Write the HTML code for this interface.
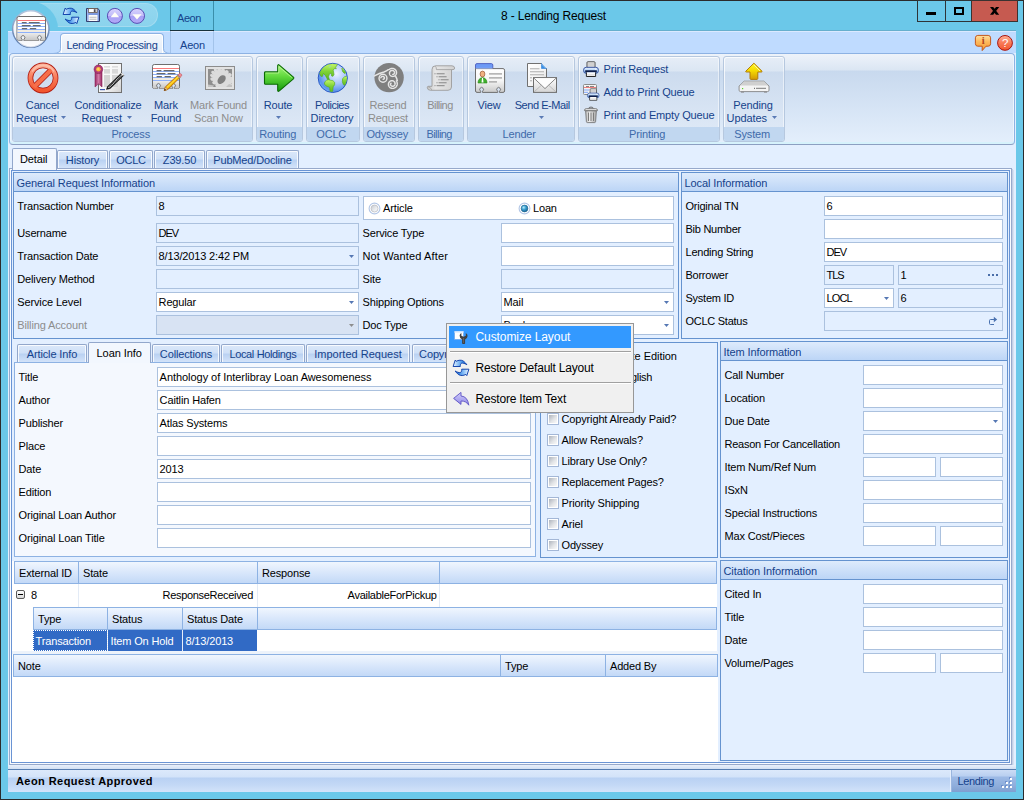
<!DOCTYPE html>
<html lang="en"><head><meta charset="utf-8"><title>8 - Lending Request</title>
<style>
html,body{margin:0;padding:0;}
body{width:1024px;height:800px;overflow:hidden;background:#6bc8e9;font-family:"Liberation Sans",sans-serif;font-size:11px;line-height:13px;color:#000;}
#win{position:absolute;left:0;top:0;width:1024px;height:800px;overflow:hidden;}
#win div,#win svg{position:absolute;box-sizing:border-box;}
.t{position:absolute;white-space:nowrap;display:block;}
.b{color:#15428b;}
.g{color:#8d8d8d;}
.f{border:1px solid #abc1de;background:#fff;}
.ro{background:#e3efff;}
.dis{background:#d8e3f3;}
.grp{border:1px solid #6593cf;background:#e3efff;}
.gh{background:linear-gradient(#deebfc,#bcd5f6);border-bottom:1px solid #6593cf;}
.rg{border:1px solid #b6c8df;border-radius:3px;box-shadow:inset 1px 1px 0 rgba(255,255,255,.75),inset -1px 0 0 rgba(255,255,255,.5);background:linear-gradient(#e6edf7 0,#dbe6f3 14px,#ccdbee 15px,#dde8f6 71px);}
.rgc{background:#c1d7f0;border-radius:0 0 2px 2px;}
.tab{border:1px solid #92a7cb;box-shadow:inset 1px 1px 0 rgba(255,255,255,.8),inset -1px 0 0 rgba(255,255,255,.8);border-bottom:none;border-radius:2px 2px 0 0;background:linear-gradient(#dbe8fa 0,#cfe0f7 45%,#b9d1f2 50%,#d6e5fa 100%);}
.tabsel{border:1px solid #92a7cb;border-bottom:none;border-radius:2px 2px 0 0;background:#f2f7fe;}
.hdr{background:linear-gradient(#f0f6fe 0,#d9e7fb 50%,#c3d9f7 100%);border:1px solid #8db2e3;}
.cb{border:1px solid #a3b7d7;background:linear-gradient(135deg,#b4b9c1 15%,#e2e4e7 55%,#f7f7f7 85%);box-shadow:inset 0 0 0 1px #fff;}

</style></head><body>
<div id="win">
<div class="" style="left:0px;top:0px;width:1024px;height:1px;background:#2b2b2b;"></div>
<div class="" style="left:0px;top:0px;width:1px;height:800px;background:#2b2b2b;"></div>
<div class="" style="left:1023px;top:0px;width:1px;height:800px;background:#2b2b2b;"></div>
<div class="" style="left:0px;top:799px;width:1024px;height:1px;background:#2b2b2b;"></div>
<div class="" style="left:214px;top:30px;width:802px;height:1px;background:#66afce;"></div>
<div class="" style="left:8px;top:31px;width:1008px;height:22px;background:#bfdbff;border-top:1px solid #dbe9ff;"></div>
<div class="" style="left:8px;top:53px;width:1008px;height:739px;background:#e3efff;"></div>
<span class="t " style="top:9px;letter-spacing:-0.160px;left:501.00px;font-size:12px;line-height:14px;">8 - Lending Request</span>
<div class="" style="left:917px;top:0px;width:101px;height:22px;background:#6bc8e9;border:1px solid #2e3436;"></div>
<div class="" style="left:945px;top:1px;width:1px;height:21px;background:#2e3436;"></div>
<div class="" style="left:971px;top:0px;width:47px;height:22px;background:#c65a50;border:1px solid #3a3231;"></div>
<div class="" style="left:926px;top:12px;width:10px;height:3px;background:#000;"></div>
<div class="" style="left:954px;top:7px;width:10px;height:8px;border:2px solid #000;"></div>
<svg style="left:989px;top:6px" width="12" height="10" viewBox="989 6 12 10"><path d="M990 7h3.2l6 7.7h-3.2zM996 7h3.2l-6 7.7h-3.2z" fill="#000"/></svg>
<div class="" style="left:34px;top:3px;width:124px;height:24px;background:linear-gradient(#93d7ef,#8bd3ed);border-radius:0 12px 12px 0;border:1px solid #a3dcf0;border-left:none;"></div>
<svg style="left:0;top:1px" width="70" height="30" viewBox="0 1 70 30"><circle cx="30.8" cy="29" r="27.2" fill="#6bc8e9"/></svg>
<div class="" style="left:170px;top:1px;width:1px;height:52px;background:linear-gradient(#3a8eaa 0,#3a8eaa 30px,#a3c3ea 30px);"></div>
<div class="" style="left:213px;top:1px;width:1px;height:52px;background:linear-gradient(#3a8eaa 0,#3a8eaa 30px,#a3c3ea 30px);"></div>
<div class="" style="left:170px;top:30px;width:44px;height:1px;background:#17323d;"></div>
<span class="t b" style="top:12px;letter-spacing:-0.430px;left:177px;">Aeon</span>
<div class="" style="left:60px;top:33px;width:104px;height:21px;background:linear-gradient(#f4f8fd,#e3ecf8);border:1px solid #8db2e3;border-bottom:none;border-radius:4px 4px 0 0;box-shadow:inset 0 1px 0 #fff,inset 1px 0 0 #fff,inset -1px 0 0 #fff;"></div>
<div class="" style="left:61px;top:53px;width:102px;height:1px;background:#e6eef9;"></div>
<svg style="left:52px;top:45px" width="9" height="9" viewBox="0 0 9 9"><path d="M8.5 0V3.5Q8.5 8.5 2 8.5H9V0Z" fill="#e3ecf8"/><path d="M8.5 0V3.5Q8.5 8.5 1 8.5" fill="none" stroke="#8db2e3"/></svg>
<svg style="left:163px;top:45px" width="9" height="9" viewBox="0 0 9 9"><path d="M.5 0V3.5Q.5 8.5 7 8.5H0V0Z" fill="#e3ecf8"/><path d="M.5 0V3.5Q.5 8.5 8 8.5" fill="none" stroke="#8db2e3"/></svg>
<span class="t b" style="top:39px;letter-spacing:-0.316px;left:66.5px;">Lending Processing</span>
<span class="t b" style="top:39px;letter-spacing:-0.180px;left:180px;">Aeon</span>
<div class="" style="left:9px;top:53px;width:1006px;height:92px;border:1px solid #8db2e3;border-bottom-color:#8c9fc2;border-radius:4px;background:linear-gradient(#eef3fa 0,#dbe6f3 16px,#c8d9ee 17px,#e4effc 100%);box-shadow:inset 0 -2px 0 #d6f2fc,inset 1px 0 0 #eef6fd,inset -1px 0 0 #eef6fd;"></div>
<div class="rg" style="left:12px;top:56px;width:241px;height:86px;"></div>
<div class="rgc" style="left:13px;top:127px;width:239px;height:14px;"></div>
<span class="t " style="top:128px;letter-spacing:-0.159px;left:111.38px;color:#3e6aaa;">Process</span>
<div class="rg" style="left:256px;top:56px;width:47px;height:86px;"></div>
<div class="rgc" style="left:257px;top:127px;width:45px;height:14px;"></div>
<span class="t " style="top:128px;letter-spacing:-0.152px;left:259.26px;color:#3e6aaa;">Routing</span>
<div class="rg" style="left:306px;top:56px;width:54px;height:86px;"></div>
<div class="rgc" style="left:307px;top:127px;width:52px;height:14px;"></div>
<span class="t " style="top:128px;letter-spacing:-0.214px;left:316.35px;color:#3e6aaa;">OCLC</span>
<div class="rg" style="left:363px;top:56px;width:52px;height:86px;"></div>
<div class="rgc" style="left:364px;top:127px;width:50px;height:14px;"></div>
<span class="t " style="top:128px;letter-spacing:-0.171px;left:366.39px;color:#3e6aaa;">Odyssey</span>
<div class="rg" style="left:418px;top:56px;width:46px;height:86px;"></div>
<div class="rgc" style="left:419px;top:127px;width:44px;height:14px;"></div>
<span class="t " style="top:128px;letter-spacing:-0.549px;left:426.45px;color:#3e6aaa;">Billing</span>
<div class="rg" style="left:467px;top:56px;width:108px;height:86px;"></div>
<div class="rgc" style="left:468px;top:127px;width:106px;height:14px;"></div>
<span class="t " style="top:128px;letter-spacing:-0.160px;left:502.54px;color:#3e6aaa;">Lender</span>
<div class="rg" style="left:578px;top:56px;width:142px;height:86px;"></div>
<div class="rgc" style="left:579px;top:127px;width:140px;height:14px;"></div>
<span class="t " style="top:128px;letter-spacing:-0.131px;left:629.07px;color:#3e6aaa;">Printing</span>
<div class="rg" style="left:723px;top:56px;width:62px;height:86px;"></div>
<div class="rgc" style="left:724px;top:127px;width:60px;height:14px;"></div>
<span class="t " style="top:128px;letter-spacing:-0.171px;left:734.37px;color:#3e6aaa;">System</span>
<span class="t b" style="top:99px;letter-spacing:-0.160px;left:25.85px;">Cancel</span>
<span class="t b" style="top:112px;letter-spacing:-0.059px;left:16.00px;">Request</span>
<svg style="left:61px;top:116px" width="5" height="3" viewBox="0 0 5 3"><path d="M0 0h5L2.5 3z" fill="#5a7ab5"/></svg>
<span class="t b" style="top:99px;letter-spacing:-0.138px;left:74.41px;">Conditionalize</span>
<span class="t b" style="top:112px;letter-spacing:-0.059px;left:81.50px;">Request</span>
<svg style="left:127px;top:116px" width="5" height="3" viewBox="0 0 5 3"><path d="M0 0h5L2.5 3z" fill="#5a7ab5"/></svg>
<span class="t b" style="top:99px;letter-spacing:-0.171px;left:154.12px;">Mark</span>
<span class="t b" style="top:112px;letter-spacing:-0.175px;left:150.83px;">Found</span>
<span class="t g" style="top:99px;letter-spacing:-0.164px;left:189.96px;">Mark Found</span>
<span class="t g" style="top:112px;letter-spacing:-0.176px;left:194.12px;">Scan Now</span>
<span class="t b" style="top:99px;letter-spacing:-0.165px;left:263.72px;">Route</span>
<svg style="left:276px;top:116px" width="5" height="3" viewBox="0 0 5 3"><path d="M0 0h5L2.5 3z" fill="#5a7ab5"/></svg>
<span class="t b" style="top:99px;letter-spacing:-0.488px;left:315.00px;">Policies</span>
<span class="t b" style="top:112px;letter-spacing:-0.137px;left:310.62px;">Directory</span>
<span class="t g" style="top:99px;letter-spacing:-0.177px;left:369.56px;">Resend</span>
<span class="t g" style="top:112px;letter-spacing:-0.164px;left:368.07px;">Request</span>
<span class="t g" style="top:99px;letter-spacing:-0.549px;left:427.25px;">Billing</span>
<span class="t b" style="top:99px;letter-spacing:-0.165px;left:477.51px;">View</span>
<span class="t b" style="top:99px;letter-spacing:-0.449px;left:514.70px;">Send E-Mail</span>
<svg style="left:539px;top:116px" width="5" height="3" viewBox="0 0 5 3"><path d="M0 0h5L2.5 3z" fill="#5a7ab5"/></svg>
<span class="t b" style="top:99px;letter-spacing:-0.162px;left:733.36px;">Pending</span>
<span class="t b" style="top:112px;letter-spacing:-0.059px;left:726.50px;">Updates</span>
<svg style="left:772px;top:116px" width="5" height="3" viewBox="0 0 5 3"><path d="M0 0h5L2.5 3z" fill="#5a7ab5"/></svg>
<span class="t b" style="top:63px;letter-spacing:-0.144px;left:603.5px;">Print Request</span>
<span class="t b" style="top:86px;letter-spacing:-0.146px;left:603.5px;">Add to Print Queue</span>
<span class="t b" style="top:109px;letter-spacing:-0.164px;left:603.5px;">Print and Empty Queue</span>
<div class="tab" style="left:57px;top:150px;width:51px;height:19px;"></div>
<span class="t b" style="top:154px;letter-spacing:-0.137px;left:65.87px;">History</span>
<div class="tab" style="left:109px;top:150px;width:44px;height:19px;"></div>
<span class="t b" style="top:154px;letter-spacing:-0.214px;left:116.15px;">OCLC</span>
<div class="tab" style="left:154px;top:150px;width:51px;height:19px;"></div>
<span class="t b" style="top:154px;letter-spacing:-0.160px;left:162.84px;">Z39.50</span>
<div class="tab" style="left:206px;top:150px;width:93px;height:19px;"></div>
<span class="t b" style="top:154px;letter-spacing:-0.161px;left:213.26px;">PubMed/Docline</span>
<div class="" style="left:9px;top:168px;width:1003px;height:597px;border:1px solid #97a9cb;background:#f8fbff;box-shadow:1px 1px 0 #c3d0e6,2px 2px 0 #d6e1f2;"></div>
<div class="" style="left:11px;top:170px;width:999px;height:593px;border:1px solid #6a94d4;background:#e3efff;"></div>
<div class="tabsel" style="left:12px;top:148px;width:45px;height:22px;"></div>
<span class="t " style="top:153px;letter-spacing:-0.131px;left:20px;">Detail</span>
<div class="grp" style="left:13px;top:172px;width:666px;height:167px;"></div>
<div class="gh" style="left:14px;top:173px;width:664px;height:19px;"></div>
<span class="t " style="top:177px;letter-spacing:-0.105px;left:16.5px;color:#15428b;">General Request Information</span>
<span class="t " style="top:200px;letter-spacing:-0.154px;left:17.3px;">Transaction Number</span>
<div class="f ro" style="left:156px;top:196px;width:203px;height:20px;"></div>
<span class="t " style="top:200px;letter-spacing:-0.171px;left:158.6px;">8</span>
<span class="t " style="top:227px;letter-spacing:-0.178px;left:17.3px;">Username</span>
<div class="f ro" style="left:156px;top:223px;width:203px;height:20px;"></div>
<span class="t " style="top:227px;letter-spacing:-1.108px;left:158.6px;">DEV</span>
<span class="t " style="top:250px;letter-spacing:-0.146px;left:17.3px;">Transaction Date</span>
<div class="f ro" style="left:156px;top:246px;width:203px;height:20px;"></div>
<span class="t " style="top:250px;letter-spacing:-0.153px;left:158.6px;">8/13/2013 2:42 PM</span>
<svg style="left:349px;top:255px" width="5" height="3" viewBox="0 0 5 3"><path d="M0 0h5L2.5 3z" fill="#5577b3"/></svg>
<span class="t " style="top:273px;letter-spacing:-0.148px;left:17.3px;">Delivery Method</span>
<div class="f ro" style="left:156px;top:269px;width:203px;height:20px;"></div>
<span class="t " style="top:296px;letter-spacing:-0.142px;left:17.3px;">Service Level</span>
<div class="f " style="left:156px;top:292px;width:203px;height:20px;"></div>
<span class="t " style="top:296px;letter-spacing:-0.154px;left:158.6px;">Regular</span>
<svg style="left:349px;top:301px" width="5" height="3" viewBox="0 0 5 3"><path d="M0 0h5L2.5 3z" fill="#5577b3"/></svg>
<span class="t g" style="top:319px;letter-spacing:-0.134px;left:17.3px;">Billing Account</span>
<div class="f dis" style="left:156px;top:315px;width:203px;height:20px;"></div>
<svg style="left:349px;top:324px" width="5" height="3" viewBox="0 0 5 3"><path d="M0 0h5L2.5 3z" fill="#8d8d8d"/></svg>
<div class="f" style="left:363px;top:196px;width:311px;height:24px;"></div>
<svg style="left:367.5px;top:201.5px" width="13" height="13" viewBox="0 0 13 13"><defs><linearGradient id="rd374" x1="0" y1="0" x2="1" y2="1"><stop offset="0" stop-color="#c4c8ce"/><stop offset=".6" stop-color="#eceef0"/><stop offset="1" stop-color="#fafafa"/></linearGradient></defs><circle cx="6.5" cy="6.5" r="5.4" fill="#fff" stroke="#b2c6e6" stroke-width="1.1"/><circle cx="6.5" cy="6.5" r="3.5" fill="url(#rd374)" stroke="#b4b8be" stroke-width=".7"/></svg>
<span class="t " style="top:202px;letter-spacing:-0.122px;left:383px;">Article</span>
<svg style="left:517.5px;top:201.5px" width="13" height="13" viewBox="0 0 13 13"><defs><radialGradient id="rd524" cx=".38" cy=".35" r=".7"><stop offset="0" stop-color="#b8ecfb"/><stop offset=".45" stop-color="#3a9fd0"/><stop offset="1" stop-color="#14608f"/></radialGradient></defs><circle cx="6.5" cy="6.5" r="5.4" fill="#fff" stroke="#b2c6e6" stroke-width="1.1"/><circle cx="6.5" cy="6.5" r="3.4" fill="url(#rd524)" stroke="#1d5f8c" stroke-width=".6"/></svg>
<span class="t " style="top:202px;letter-spacing:-0.171px;left:533px;">Loan</span>
<span class="t " style="top:227px;letter-spacing:-0.148px;left:362.5px;">Service Type</span>
<div class="f " style="left:501px;top:223px;width:173px;height:20px;"></div>
<span class="t " style="top:250px;letter-spacing:0.130px;left:362.5px;">Not Wanted After</span>
<div class="f " style="left:501px;top:246px;width:173px;height:20px;"></div>
<span class="t " style="top:273px;letter-spacing:-0.133px;left:362.5px;">Site</span>
<div class="f ro" style="left:501px;top:269px;width:173px;height:20px;"></div>
<span class="t " style="top:296px;letter-spacing:-0.147px;left:362.5px;">Shipping Options</span>
<div class="f " style="left:501px;top:292px;width:173px;height:20px;"></div>
<span class="t " style="top:296px;letter-spacing:-0.141px;left:503.6px;">Mail</span>
<svg style="left:664px;top:301px" width="5" height="3" viewBox="0 0 5 3"><path d="M0 0h5L2.5 3z" fill="#5577b3"/></svg>
<span class="t " style="top:319px;letter-spacing:-0.162px;left:362.5px;">Doc Type</span>
<div class="f " style="left:501px;top:315px;width:173px;height:20px;"></div>
<span class="t " style="top:319px;letter-spacing:-0.176px;left:503.6px;">Book</span>
<svg style="left:664px;top:324px" width="5" height="3" viewBox="0 0 5 3"><path d="M0 0h5L2.5 3z" fill="#5577b3"/></svg>
<div class="grp" style="left:681px;top:172px;width:327px;height:167px;"></div>
<div class="gh" style="left:682px;top:173px;width:325px;height:19px;"></div>
<span class="t " style="top:177px;letter-spacing:-0.099px;left:684.5px;color:#15428b;">Local Information</span>
<span class="t " style="top:200px;letter-spacing:-0.227px;left:685.5px;">Original TN</span>
<span class="t " style="top:223px;letter-spacing:-0.261px;left:685.5px;">Bib Number</span>
<span class="t " style="top:246px;letter-spacing:-0.228px;left:685.5px;">Lending String</span>
<span class="t " style="top:269px;letter-spacing:-0.251px;left:685.5px;">Borrower</span>
<span class="t " style="top:292px;letter-spacing:-0.254px;left:685.5px;">System ID</span>
<span class="t " style="top:315px;letter-spacing:-0.265px;left:685.5px;">OCLC Status</span>
<div class="f " style="left:824px;top:196px;width:179px;height:20px;"></div>
<span class="t " style="top:200px;letter-spacing:-0.171px;left:826.6px;">6</span>
<div class="f " style="left:824px;top:219px;width:179px;height:20px;"></div>
<div class="f " style="left:824px;top:242px;width:179px;height:20px;"></div>
<span class="t " style="top:246px;letter-spacing:-1.108px;left:826.6px;">DEV</span>
<div class="f ro" style="left:824px;top:265px;width:70px;height:20px;"></div>
<span class="t " style="top:269px;letter-spacing:-1.062px;left:826.6px;">TLS</span>
<div class="f ro" style="left:898px;top:265px;width:105px;height:20px;"></div>
<span class="t " style="top:269px;letter-spacing:-0.171px;left:900.6px;">1</span>
<div class="" style="left:988px;top:274px;width:2px;height:2px;background:#4a6ea9;"></div>
<div class="" style="left:992px;top:274px;width:2px;height:2px;background:#4a6ea9;"></div>
<div class="" style="left:996px;top:274px;width:2px;height:2px;background:#4a6ea9;"></div>
<div class="f " style="left:824px;top:288px;width:70px;height:20px;"></div>
<span class="t " style="top:292px;letter-spacing:-0.938px;left:826.6px;">LOCL</span>
<svg style="left:884px;top:297px" width="5" height="3" viewBox="0 0 5 3"><path d="M0 0h5L2.5 3z" fill="#5577b3"/></svg>
<div class="f ro" style="left:898px;top:288px;width:105px;height:20px;"></div>
<span class="t " style="top:292px;letter-spacing:-0.171px;left:900.6px;">6</span>
<div class="f ro" style="left:824px;top:311px;width:179px;height:20px;"></div>
<svg style="left:988px;top:315px" width="11" height="12" viewBox="988 315 11 12"><path d="M994 324.5H990.5Q989.5 324.5 989.5 323.5V320.5Q989.5 319.5 990.5 319.5H995" fill="none" stroke="#4a72b0" stroke-width="1"/><path d="M993.8 316.8L997.2 319.5L993.8 322.2Z" fill="#4a72b0"/></svg>
<div class="tab" style="left:17px;top:344px;width:70px;height:19px;"></div>
<span class="t b" style="top:348px;letter-spacing:-0.121px;left:26.73px;">Article Info</span>
<div class="tab" style="left:152px;top:344px;width:68px;height:19px;"></div>
<span class="t b" style="top:348px;letter-spacing:-0.137px;left:159.85px;">Collections</span>
<div class="tab" style="left:221px;top:344px;width:84px;height:19px;"></div>
<span class="t b" style="top:348px;letter-spacing:-0.371px;left:229.50px;">Local Holdings</span>
<div class="tab" style="left:306px;top:344px;width:104px;height:19px;"></div>
<span class="t b" style="top:348px;letter-spacing:0.000px;left:314.25px;">Imported Request</span>
<div class="tab" style="left:412px;top:344px;width:60px;height:19px;"></div>
<span class="t b" style="top:348px;letter-spacing:-0.147px;left:419.11px;">Copyright</span>
<div class="" style="left:14px;top:362px;width:522px;height:195px;border:1px solid #8db2e3;background:#f4f8fe;"></div>
<div class="tabsel" style="left:88px;top:342px;width:63px;height:21px;"></div>
<span class="t " style="top:347px;letter-spacing:-0.049px;left:96.5px;">Loan Info</span>
<span class="t " style="top:371px;letter-spacing:-0.114px;left:18.5px;">Title</span>
<div class="f " style="left:157px;top:367px;width:374px;height:20px;"></div>
<span class="t " style="top:371px;letter-spacing:-0.048px;left:159.6px;">Anthology of Interlibray Loan Awesomeness</span>
<span class="t " style="top:394px;letter-spacing:-0.151px;left:18.5px;">Author</span>
<div class="f " style="left:157px;top:390px;width:374px;height:20px;"></div>
<span class="t " style="top:394px;letter-spacing:-0.136px;left:159.6px;">Caitlin Hafen</span>
<span class="t " style="top:417px;letter-spacing:-0.143px;left:18.5px;">Publisher</span>
<div class="f " style="left:157px;top:413px;width:374px;height:20px;"></div>
<span class="t " style="top:417px;letter-spacing:-0.150px;left:159.6px;">Atlas Systems</span>
<span class="t " style="top:440px;letter-spacing:-0.154px;left:18.5px;">Place</span>
<div class="f " style="left:157px;top:436px;width:374px;height:20px;"></div>
<span class="t " style="top:463px;letter-spacing:-0.163px;left:18.5px;">Date</span>
<div class="f " style="left:157px;top:459px;width:374px;height:20px;"></div>
<span class="t " style="top:463px;letter-spacing:-0.171px;left:159.6px;">2013</span>
<span class="t " style="top:486px;letter-spacing:-0.135px;left:18.5px;">Edition</span>
<div class="f " style="left:157px;top:482px;width:374px;height:20px;"></div>
<span class="t " style="top:509px;letter-spacing:-0.141px;left:18.5px;">Original Loan Author</span>
<div class="f " style="left:157px;top:505px;width:374px;height:20px;"></div>
<span class="t " style="top:532px;letter-spacing:-0.131px;left:18.5px;">Original Loan Title</span>
<div class="f " style="left:157px;top:528px;width:374px;height:20px;"></div>
<div class="" style="left:540px;top:342px;width:178px;height:216px;border:1px solid #6593cf;background:#e3efff;"></div>
<div class="cb" style="left:547px;top:350px;width:12px;height:12px;"></div>
<span class="t " style="top:350px;letter-spacing:-0.058px;left:561.5px;">Accept Alternate Edition</span>
<div class="cb" style="left:547px;top:371px;width:12px;height:12px;"></div>
<span class="t " style="top:371px;letter-spacing:-0.342px;left:561.5px;">Accept Non-English</span>
<div class="cb" style="left:547px;top:392px;width:12px;height:12px;"></div>
<span class="t " style="top:392px;letter-spacing:-0.146px;left:561.5px;">Will Pay Fee?</span>
<div class="cb" style="left:547px;top:413px;width:12px;height:12px;"></div>
<span class="t " style="top:413px;letter-spacing:-0.144px;left:561.5px;">Copyright Already Paid?</span>
<div class="cb" style="left:547px;top:434px;width:12px;height:12px;"></div>
<span class="t " style="top:434px;letter-spacing:-0.156px;left:561.5px;">Allow Renewals?</span>
<div class="cb" style="left:547px;top:455px;width:12px;height:12px;"></div>
<span class="t " style="top:455px;letter-spacing:-0.145px;left:561.5px;">Library Use Only?</span>
<div class="cb" style="left:547px;top:476px;width:12px;height:12px;"></div>
<span class="t " style="top:476px;letter-spacing:-0.164px;left:561.5px;">Replacement Pages?</span>
<div class="cb" style="left:547px;top:497px;width:12px;height:12px;"></div>
<span class="t " style="top:497px;letter-spacing:-0.132px;left:561.5px;">Priority Shipping</span>
<div class="cb" style="left:547px;top:518px;width:12px;height:12px;"></div>
<span class="t " style="top:518px;letter-spacing:-0.123px;left:561.5px;">Ariel</span>
<div class="cb" style="left:547px;top:539px;width:12px;height:12px;"></div>
<span class="t " style="top:539px;letter-spacing:-0.171px;left:561.5px;">Odyssey</span>
<div class="grp" style="left:720px;top:341px;width:288px;height:217px;"></div>
<div class="gh" style="left:721px;top:342px;width:286px;height:19px;"></div>
<span class="t " style="top:346px;letter-spacing:-0.099px;left:723.5px;color:#15428b;">Item Information</span>
<span class="t " style="top:369px;letter-spacing:-0.156px;left:724.5px;">Call Number</span>
<div class="f " style="left:863px;top:365px;width:140px;height:20px;"></div>
<span class="t " style="top:392px;letter-spacing:-0.146px;left:724.5px;">Location</span>
<div class="f " style="left:863px;top:388px;width:140px;height:20px;"></div>
<span class="t " style="top:415px;letter-spacing:-0.163px;left:724.5px;">Due Date</span>
<div class="f " style="left:863px;top:411px;width:140px;height:20px;"></div>
<svg style="left:993px;top:420px" width="5" height="3" viewBox="0 0 5 3"><path d="M0 0h5L2.5 3z" fill="#5577b3"/></svg>
<span class="t " style="top:438px;letter-spacing:-0.245px;left:724.5px;">Reason For Cancellation</span>
<div class="f " style="left:863px;top:434px;width:140px;height:20px;"></div>
<span class="t " style="top:461px;letter-spacing:-0.165px;left:724.5px;">Item Num/Ref Num</span>
<div class="f " style="left:863px;top:457px;width:73px;height:20px;"></div>
<div class="f " style="left:940px;top:457px;width:63px;height:20px;"></div>
<span class="t " style="top:484px;letter-spacing:-0.167px;left:724.5px;">ISxN</span>
<div class="f " style="left:863px;top:480px;width:140px;height:20px;"></div>
<span class="t " style="top:507px;letter-spacing:-0.134px;left:724.5px;">Special Instructions</span>
<div class="f " style="left:863px;top:503px;width:140px;height:20px;"></div>
<span class="t " style="top:530px;letter-spacing:-0.154px;left:724.5px;">Max Cost/Pieces</span>
<div class="f " style="left:863px;top:526px;width:73px;height:20px;"></div>
<div class="f " style="left:940px;top:526px;width:63px;height:20px;"></div>
<div class="grp" style="left:720px;top:560px;width:288px;height:201px;"></div>
<div class="gh" style="left:721px;top:561px;width:286px;height:19px;"></div>
<span class="t " style="top:565px;letter-spacing:-0.095px;left:723.5px;color:#15428b;">Citation Information</span>
<span class="t " style="top:588px;letter-spacing:-0.133px;left:724.5px;">Cited In</span>
<div class="f " style="left:863px;top:584px;width:140px;height:20px;"></div>
<span class="t " style="top:611px;letter-spacing:-0.114px;left:724.5px;">Title</span>
<div class="f " style="left:863px;top:607px;width:140px;height:20px;"></div>
<span class="t " style="top:634px;letter-spacing:-0.163px;left:724.5px;">Date</span>
<div class="f " style="left:863px;top:630px;width:140px;height:20px;"></div>
<span class="t " style="top:657px;letter-spacing:-0.166px;left:724.5px;">Volume/Pages</span>
<div class="f " style="left:863px;top:653px;width:73px;height:20px;"></div>
<div class="f " style="left:940px;top:653px;width:63px;height:20px;"></div>
<div class="" style="left:12px;top:561px;width:705px;height:90px;background:#fff;"></div>
<div class="hdr" style="left:14px;top:561px;width:65px;height:23px;"></div>
<span class="t " style="top:567px;letter-spacing:-0.139px;left:19px;">External ID</span>
<div class="hdr" style="left:78px;top:561px;width:180px;height:23px;"></div>
<span class="t " style="top:567px;letter-spacing:-0.144px;left:83px;">State</span>
<div class="hdr" style="left:257px;top:561px;width:183px;height:23px;"></div>
<span class="t " style="top:567px;letter-spacing:-0.173px;left:262px;">Response</span>
<div class="hdr" style="left:439px;top:561px;width:278px;height:23px;"></div>
<div class="" style="left:78px;top:584px;width:1px;height:23px;background:#e3ebf6;"></div>
<div class="" style="left:257px;top:584px;width:1px;height:23px;background:#e3ebf6;"></div>
<div class="" style="left:439px;top:584px;width:1px;height:23px;background:#e3ebf6;"></div>
<div class="" style="left:16px;top:590px;width:9px;height:9px;border:1px solid #5a5a5a;border-radius:2px;background:linear-gradient(#fff,#d8d8d8);"></div>
<div class="" style="left:18px;top:594px;width:5px;height:1px;background:#000;"></div>
<span class="t " style="top:589px;letter-spacing:-0.171px;left:31px;">8</span>
<span class="t " style="top:589px;letter-spacing:-0.309px;left:162.50px;">ResponseReceived</span>
<span class="t " style="top:589px;letter-spacing:-0.277px;left:347.60px;">AvailableForPickup</span>
<div class="hdr" style="left:33px;top:607px;width:75px;height:23px;"></div>
<span class="t " style="top:613px;letter-spacing:-0.167px;left:38px;">Type</span>
<div class="hdr" style="left:107px;top:607px;width:76px;height:23px;"></div>
<span class="t " style="top:613px;letter-spacing:-0.146px;left:112px;">Status</span>
<div class="hdr" style="left:182px;top:607px;width:76px;height:23px;"></div>
<span class="t " style="top:613px;letter-spacing:-0.146px;left:187px;">Status Date</span>
<div class="hdr" style="left:257px;top:607px;width:460px;height:23px;"></div>
<div class="" style="left:33px;top:630px;width:224px;height:21px;background:#316ac5;"></div>
<div class="" style="left:107px;top:630px;width:1px;height:21px;background:#e8eef8;"></div>
<div class="" style="left:182px;top:630px;width:1px;height:21px;background:#e8eef8;"></div>
<div class="" style="left:33px;top:630px;width:75px;height:21px;border:1px dotted #fff;"></div>
<span class="t " style="top:635px;letter-spacing:-0.145px;left:35.5px;color:#fff;">Transaction</span>
<span class="t " style="top:635px;letter-spacing:-0.151px;left:110.5px;color:#fff;">Item On Hold</span>
<span class="t " style="top:635px;letter-spacing:-0.152px;left:185.5px;color:#fff;">8/13/2013</span>
<div class="" style="left:12px;top:651px;width:706px;height:3px;background:#edf3fb;"></div>
<div class="" style="left:12px;top:654px;width:706px;height:108px;background:#fff;"></div>
<div class="hdr" style="left:13px;top:654px;width:488px;height:23px;"></div>
<span class="t " style="top:660px;letter-spacing:-0.163px;left:18px;">Note</span>
<div class="hdr" style="left:500px;top:654px;width:106px;height:23px;"></div>
<span class="t " style="top:660px;letter-spacing:-0.167px;left:505px;">Type</span>
<div class="hdr" style="left:605px;top:654px;width:113px;height:23px;"></div>
<span class="t " style="top:660px;letter-spacing:-0.167px;left:610px;">Added By</span>
<div class="" style="left:8px;top:765px;width:1008px;height:4px;background:linear-gradient(#e9f0fb,#d3e0f3);"></div>
<div class="" style="left:8px;top:769px;width:1008px;height:23px;background:linear-gradient(#dce9fb 0,#d3e3f9 7px,#b9d1f3 8px,#c3d8f6 15px,#d3e3f9 100%);border-top:1px solid #567db1;"></div>
<div class="" style="left:951px;top:770px;width:65px;height:22px;background:linear-gradient(#ccdcf5 0,#b9cff0 6px,#9dbae6 7px,#8eaddb 16px,#7f9fd0 100%);border-left:1px solid #9ab6df;box-shadow:-1px 0 0 #e4eefc;"></div>
<div class="" style="left:1009px;top:777px;width:2px;height:2px;background:#6f90cc;"></div>
<div class="" style="left:1010px;top:778px;width:2px;height:2px;background:#fff;"></div>
<div class="" style="left:1009px;top:781px;width:2px;height:2px;background:#6f90cc;"></div>
<div class="" style="left:1010px;top:782px;width:2px;height:2px;background:#fff;"></div>
<div class="" style="left:1009px;top:785px;width:2px;height:2px;background:#6f90cc;"></div>
<div class="" style="left:1010px;top:786px;width:2px;height:2px;background:#fff;"></div>
<div class="" style="left:1005px;top:781px;width:2px;height:2px;background:#6f90cc;"></div>
<div class="" style="left:1006px;top:782px;width:2px;height:2px;background:#fff;"></div>
<div class="" style="left:1005px;top:785px;width:2px;height:2px;background:#6f90cc;"></div>
<div class="" style="left:1006px;top:786px;width:2px;height:2px;background:#fff;"></div>
<div class="" style="left:1001px;top:785px;width:2px;height:2px;background:#6f90cc;"></div>
<div class="" style="left:1002px;top:786px;width:2px;height:2px;background:#fff;"></div>
<span class="t " style="top:775px;letter-spacing:0.430px;left:16px;font-weight:bold;">Aeon Request Approved</span>
<span class="t b" style="top:775px;letter-spacing:-0.384px;left:957.5px;">Lending</span>
<div class="" style="left:446px;top:323px;width:188px;height:90px;background:#f0f0f0;border:1px solid #979797;"></div>
<div class="" style="left:449px;top:326px;width:182px;height:22px;background:#3399ff;"></div>
<span class="t " style="top:330px;letter-spacing:-0.083px;left:475.5px;color:#fff;font-size:12px;line-height:14px;">Customize Layout</span>
<div class="" style="left:450px;top:351px;width:181px;height:1px;background:#a0a0a0;"></div>
<div class="" style="left:450px;top:352px;width:181px;height:1px;background:#fff;"></div>
<span class="t " style="top:361px;letter-spacing:-0.214px;left:475.5px;font-size:12px;line-height:14px;">Restore Default Layout</span>
<div class="" style="left:450px;top:382px;width:181px;height:1px;background:#a0a0a0;"></div>
<div class="" style="left:450px;top:383px;width:181px;height:1px;background:#fff;"></div>
<span class="t " style="top:392px;letter-spacing:-0.193px;left:475.5px;font-size:12px;line-height:14px;">Restore Item Text</span>
<svg style="left:0;top:0;pointer-events:none" width="1024" height="800" viewBox="0 0 1024 800">
<defs>
<linearGradient id="gApp" x1="0" y1="0" x2="0" y2="1"><stop offset="0" stop-color="#ffffff"/><stop offset=".55" stop-color="#f4f6fa"/><stop offset=".8" stop-color="#dfe5ee"/><stop offset="1" stop-color="#f6f8fb"/></linearGradient>
<linearGradient id="gAppR" x1="0" y1="0" x2="0" y2="1"><stop offset="0" stop-color="#b4c6de"/><stop offset=".5" stop-color="#7d98c2"/><stop offset="1" stop-color="#5273a6"/></linearGradient>
<linearGradient id="gCardB" x1="0" y1="0" x2="0" y2="1"><stop offset="0" stop-color="#ececec"/><stop offset="1" stop-color="#c4c4c4"/></linearGradient>
<linearGradient id="gBlue" x1="0" y1="0" x2="0" y2="1"><stop offset="0" stop-color="#a8d0fb"/><stop offset=".5" stop-color="#4f8fe6"/><stop offset="1" stop-color="#2a62c8"/></linearGradient>
<linearGradient id="gLav" x1="0" y1="0" x2="0" y2="1"><stop offset="0" stop-color="#d6d2fc"/><stop offset=".5" stop-color="#c2bcf9"/><stop offset=".52" stop-color="#a89ff5"/><stop offset="1" stop-color="#b2aaf7"/></linearGradient>
<linearGradient id="gRed" x1="0" y1="0" x2="0" y2="1"><stop offset="0" stop-color="#fdb096"/><stop offset=".5" stop-color="#f87a58"/><stop offset="1" stop-color="#f2562e"/></linearGradient>
<linearGradient id="gDoc" x1="0" y1="0" x2="1" y2="1"><stop offset="0" stop-color="#ffffff"/><stop offset=".6" stop-color="#f4f4f4"/><stop offset="1" stop-color="#cfcfcf"/></linearGradient>
<linearGradient id="gMag" x1="0" y1="0" x2="1" y2="0"><stop offset="0" stop-color="#9a2a64"/><stop offset=".5" stop-color="#d07aa6"/><stop offset="1" stop-color="#9a2a64"/></linearGradient>
<linearGradient id="gGreen" x1="0" y1="0" x2="0" y2="1"><stop offset="0" stop-color="#a6f57a"/><stop offset=".45" stop-color="#5fd83c"/><stop offset="1" stop-color="#14980c"/></linearGradient>
<radialGradient id="gGlobe" cx=".62" cy=".35" r=".75"><stop offset="0" stop-color="#eef3ff"/><stop offset=".45" stop-color="#a9c6fa"/><stop offset=".8" stop-color="#5b93ec"/><stop offset="1" stop-color="#8fd0ff"/></radialGradient>
<linearGradient id="gLand" x1="0" y1="0" x2="0" y2="1"><stop offset="0" stop-color="#c6f76a"/><stop offset=".5" stop-color="#7fd236"/><stop offset="1" stop-color="#5cb81e"/></linearGradient>
<linearGradient id="gScroll" x1="0" y1="0" x2="1" y2="0"><stop offset="0" stop-color="#c8c8c8"/><stop offset=".3" stop-color="#e6e6e6"/><stop offset="1" stop-color="#d2d2d2"/></linearGradient>
<linearGradient id="gCardW" x1="0" y1="0" x2="0" y2="1"><stop offset="0" stop-color="#ffffff"/><stop offset=".5" stop-color="#f6f6f6"/><stop offset="1" stop-color="#c9c9c9"/></linearGradient>
<linearGradient id="gEnv" x1="0" y1="0" x2="0" y2="1"><stop offset="0" stop-color="#ffffff"/><stop offset="1" stop-color="#d4d4d4"/></linearGradient>
<linearGradient id="gYel" x1="0" y1="0" x2="0" y2="1"><stop offset="0" stop-color="#fff82a"/><stop offset=".45" stop-color="#f6dc00"/><stop offset="1" stop-color="#d29a06"/></linearGradient>
<linearGradient id="gOr" x1="0" y1="0" x2="0" y2="1"><stop offset="0" stop-color="#ffe0a0"/><stop offset=".4" stop-color="#fdbb5e"/><stop offset="1" stop-color="#f5962c"/></linearGradient>
<linearGradient id="gTrash" x1="0" y1="0" x2="1" y2="0"><stop offset="0" stop-color="#b4b4b4"/><stop offset=".35" stop-color="#ececec"/><stop offset="1" stop-color="#a8a8a8"/></linearGradient>
<linearGradient id="gPrn" x1="0" y1="0" x2="0" y2="1"><stop offset="0" stop-color="#eaf3fe"/><stop offset=".5" stop-color="#b4d2f6"/><stop offset="1" stop-color="#7fb0ee"/></linearGradient>
<linearGradient id="gUndo" x1="0" y1="0" x2="0" y2="1"><stop offset="0" stop-color="#d2cefb"/><stop offset="1" stop-color="#8f88e6"/></linearGradient>
<linearGradient id="gRef" x1="0" y1="0" x2="1" y2="0"><stop offset="0" stop-color="#f2f8ff"/><stop offset=".3" stop-color="#9ccbfa"/><stop offset=".7" stop-color="#3f8ee6"/><stop offset="1" stop-color="#1d63d0"/></linearGradient>
</defs>
<circle cx="30.8" cy="29" r="18.2" fill="url(#gApp)" stroke="url(#gAppR)" stroke-width="1.5"/>
<path d="M14.5 34a16.6 16.6 0 0 0 32.6 0a22 22 0 0 1 -32.6 0z" fill="#fff" opacity=".7"/>
<g transform="translate(16.5,16)"><rect x=".5" y=".5" width="28.5" height="24" rx="1.8" fill="#fff" stroke="#6e6e6e"/><rect x="1" y="13.6" width="27.5" height="2.6" fill="#f1ece2"/><path d="M1 17h27.5v6.600000000000001q0 .8 -.8 .8h-25.9q-.8 0 -.8 -.8z" fill="url(#gCardB)"/><rect x="1" y="4" width="27.5" height="1" fill="#f97a7a"/><rect x="1" y="7" width="27.5" height="1" fill="#8db0fa"/><rect x="1" y="10" width="27.5" height="1" fill="#8db0fa"/><rect x="1" y="13" width="27.5" height="1" fill="#8db0fa"/><rect x="1" y="16" width="27.5" height="1" fill="#8db0fa"/><rect x="5.25" y="6" width="5.0" height="1.2" rx=".5" fill="#6a6a6a"/><rect x="12.25" y="6" width="11.0" height="1.2" rx=".5" fill="#6a6a6a"/><rect x="5.25" y="9" width="9.0" height="1.2" rx=".5" fill="#6a6a6a"/><rect x="16.25" y="9" width="8.0" height="1.2" rx=".5" fill="#6a6a6a"/><rect x="5.25" y="12" width="5.5" height="1.2" rx=".5" fill="#6a6a6a"/><rect x="13.25" y="12" width="6.5" height="1.2" rx=".5" fill="#6a6a6a"/><path d="M5.6 25.3v-2.1a1.9 1.9 0 1 1 1.8 0v2.1z" fill="#eef1f6"/><path d="M5.6 24.6v-1.4a1.9 1.9 0 1 1 1.8 0v1.4" fill="none" stroke="#6e6e6e" stroke-width=".9"/><path d="M22.1 25.3v-2.1a1.9 1.9 0 1 1 1.8 0v2.1z" fill="#eef1f6"/><path d="M22.1 24.6v-1.4a1.9 1.9 0 1 1 1.8 0v1.4" fill="none" stroke="#6e6e6e" stroke-width=".9"/></g>
<g transform="translate(63,8)" stroke="#0d3eaa" stroke-width=".95" stroke-linejoin="round"><path d="M.1 6.5L2.2 .1L3.1 1.3C5.5 0 8.5 -.2 10.2 1C12 2.2 13 3.6 13.8 4.7C12 3.6 10 2.8 8.6 3.2C7.6 3.6 7.2 4.8 7.3 6.5Z" fill="url(#gRef)"/><path d="M.1 6.5L2.2 .1L3.1 1.3C5.5 0 8.5 -.2 10.2 1C12 2.2 13 3.6 13.8 4.7C12 3.6 10 2.8 8.6 3.2C7.6 3.6 7.2 4.8 7.3 6.5Z" fill="url(#gRef)" transform="rotate(180 8 7.85)"/></g>
<g transform="translate(86,8)"><path d="M.5 .5h11.3l1.7 1.7v11.3h-13z" fill="#7f9ade" stroke="#34406e"/><rect x="2.5" y=".6" width="8.6" height="3.9" fill="#fff" stroke="#6a5a4a" stroke-width=".8"/><rect x="7.8" y="1.2" width="1.8" height="2.8" fill="#4a4a5a"/><rect x="2.5" y="7" width="9" height="6" fill="#fbfbfb"/><rect x="3.5" y="8.8" width="7" height=".9" fill="#b8b8b8"/><rect x="3.5" y="10.8" width="7" height=".9" fill="#b8b8b8"/><rect x="1" y="1" width="1.2" height="12" fill="#a9bdf0" opacity=".8"/></g>
<circle cx="114.9" cy="15.9" r="7.5" fill="url(#gLav)" stroke="#584eb4" stroke-width="1"/>
<path d="M110.60000000000001 17.3l4.3 -5.2l4.3 5.2z" fill="#fffef6"/>
<circle cx="137" cy="15.9" r="7.5" fill="url(#gLav)" stroke="#584eb4" stroke-width="1"/>
<path d="M132.4 14.2h9.2l-4.6 5.2z" fill="#fffef6"/>
<g fill="none"><circle cx="43" cy="78" r="12.6" stroke="#b31d12" stroke-width="5.6"/><path d="M35 86L51 70" stroke="#b31d12" stroke-width="5.6"/><circle cx="43" cy="78" r="12.6" stroke="url(#gRed)" stroke-width="4"/><path d="M34 87L52 69" stroke="#f66e4a" stroke-width="4"/><path d="M32.2 71.5a12.6 12.6 0 0 1 21.6 0" stroke="#fec4b0" stroke-width="1.6" opacity=".8"/></g>
<rect x="98.5" y="63.5" width="23" height="29" fill="url(#gDoc)" stroke="#707070"/>
<rect x="104" y="66" width="6" height="1.6" fill="#dcdcdc"/><rect x="104" y="69" width="6" height="4.6" fill="#d8d8d8"/><rect x="104" y="75" width="6" height="12" fill="#d4d4d4"/>
<rect x="112" y="66" width="6" height="1.6" fill="#dcdcdc"/><rect x="112" y="69" width="6" height="4.6" fill="#d8d8d8"/><rect x="112" y="75" width="6" height="12" fill="#d4d4d4"/>
<rect x="100" y="89" width="5" height="1.2" fill="#3a58b0"/>
<path d="M95 71.5h7v15.5l-3.5 -3.2l-3.5 3.2z" fill="url(#gMag)" stroke="#8a2258" stroke-width=".6"/>
<circle cx="98.4" cy="69.3" r="4.3" fill="#b03a78" stroke="#8a2258" stroke-width=".7"/><circle cx="98.4" cy="69.3" r="2.3" fill="#fdb83a"/><circle cx="98.1" cy="68.9" r="1" fill="#ffd86a"/>
<path d="M106 89.8L107.2 86.4L121.6 72.4L124.4 75.2L110 89Z" fill="#161616"/><path d="M108.6 87.7L122.2 74.6" stroke="#fff" stroke-width="1.5" stroke-dasharray="0.8 0.75" fill="none"/><path d="M121.4 73.2l2.2 2.2" stroke="#f4f4f4" stroke-width="1.6"/>
<g transform="translate(152,64)"><rect x=".5" y=".5" width="27" height="24" rx="1.8" fill="#fff" stroke="#6e6e6e"/><rect x="1" y="13.6" width="26" height="2.6" fill="#f1ece2"/><path d="M1 17h26v6.600000000000001q0 .8 -.8 .8h-24.4q-.8 0 -.8 -.8z" fill="url(#gCardB)"/><rect x="1" y="4" width="26" height="1" fill="#f97a7a"/><rect x="1" y="7" width="26" height="1" fill="#8db0fa"/><rect x="1" y="10" width="26" height="1" fill="#8db0fa"/><rect x="1" y="13" width="26" height="1" fill="#8db0fa"/><rect x="1" y="16" width="26" height="1" fill="#8db0fa"/><rect x="4.5" y="6" width="5.0" height="1.2" rx=".5" fill="#6a6a6a"/><rect x="11.5" y="6" width="11.0" height="1.2" rx=".5" fill="#6a6a6a"/><rect x="4.5" y="9" width="9.0" height="1.2" rx=".5" fill="#6a6a6a"/><rect x="15.5" y="9" width="8.0" height="1.2" rx=".5" fill="#6a6a6a"/><rect x="4.5" y="12" width="5.5" height="1.2" rx=".5" fill="#6a6a6a"/><rect x="12.5" y="12" width="6.5" height="1.2" rx=".5" fill="#6a6a6a"/><path d="M5.6 25.3v-2.1a1.9 1.9 0 1 1 1.8 0v2.1z" fill="#d6e2f2"/><path d="M5.6 24.6v-1.4a1.9 1.9 0 1 1 1.8 0v1.4" fill="none" stroke="#6e6e6e" stroke-width=".9"/><path d="M20.6 25.3v-2.1a1.9 1.9 0 1 1 1.8 0v2.1z" fill="#d6e2f2"/><path d="M20.6 24.6v-1.4a1.9 1.9 0 1 1 1.8 0v1.4" fill="none" stroke="#6e6e6e" stroke-width=".9"/></g>
<g><path d="M164.3 90.6L165.4 86.9L178.2 74.7L180.5 77L167.8 89.4Z" fill="#f8be08" stroke="#a85a08" stroke-width=".8" stroke-linejoin="round"/><path d="M166.7 87.6L179 75.9" stroke="#ffe45a" stroke-width=".9"/><path d="M164.3 90.6L165.4 86.9L167.8 89.4Z" fill="#f6d6a8" stroke="#a85a08" stroke-width=".5"/><path d="M164.3 90.6l.55 -1.8l1.2 1.25z" fill="#111"/><path d="M176.9 75.9L178.2 74.7L180.5 77L179.2 78.3Z" fill="#9a9a9a"/><path d="M178 74.9L179.3 73.6Q180.4 73 181.3 74Q182.2 75 181.6 76L180.3 77.2Z" fill="#ef8a92" stroke="#b8545e" stroke-width=".5"/></g>
<rect x="205.5" y="66.5" width="29" height="23" fill="#e2e2e2" stroke="#8c8c8c"/><rect x="208" y="69" width="24" height="18" fill="#8e8e8e"/>
<clipPath id="cPhoto"><rect x="208" y="69" width="24" height="18"/></clipPath>
<g clip-path="url(#cPhoto)"><g transform="translate(222,78.8) rotate(35) scale(1.28,1.0)" fill="#dcdcdc"><ellipse cx="0" cy="-7.2" rx="1.7" ry="2.9" transform="rotate(0.0)"/><ellipse cx="0" cy="-7.2" rx="1.7" ry="2.9" transform="rotate(22.5)"/><ellipse cx="0" cy="-7.2" rx="1.7" ry="2.9" transform="rotate(45.0)"/><ellipse cx="0" cy="-7.2" rx="1.7" ry="2.9" transform="rotate(67.5)"/><ellipse cx="0" cy="-7.2" rx="1.7" ry="2.9" transform="rotate(90.0)"/><ellipse cx="0" cy="-7.2" rx="1.7" ry="2.9" transform="rotate(112.5)"/><ellipse cx="0" cy="-7.2" rx="1.7" ry="2.9" transform="rotate(135.0)"/><ellipse cx="0" cy="-7.2" rx="1.7" ry="2.9" transform="rotate(157.5)"/><ellipse cx="0" cy="-7.2" rx="1.7" ry="2.9" transform="rotate(180.0)"/><ellipse cx="0" cy="-7.2" rx="1.7" ry="2.9" transform="rotate(202.5)"/><ellipse cx="0" cy="-7.2" rx="1.7" ry="2.9" transform="rotate(225.0)"/><ellipse cx="0" cy="-7.2" rx="1.7" ry="2.9" transform="rotate(247.5)"/><ellipse cx="0" cy="-7.2" rx="1.7" ry="2.9" transform="rotate(270.0)"/><ellipse cx="0" cy="-7.2" rx="1.7" ry="2.9" transform="rotate(292.5)"/><ellipse cx="0" cy="-7.2" rx="1.7" ry="2.9" transform="rotate(315.0)"/><ellipse cx="0" cy="-7.2" rx="1.7" ry="2.9" transform="rotate(337.5)"/><circle r="6.2"/></g></g>
<ellipse cx="221.6" cy="79.6" rx="3.4" ry="5" transform="rotate(40 221.6 79.6)" fill="#808080"/>
<path d="M208 84.5l6 1l-1 1.5h-5zM226 87l3 -3l3 1v2z" fill="#c2c2c2"/>
<path d="M265.2 71.9H277.7V65.6Q277.9 64 279.3 65.1L293.4 77.2Q294.2 78 293.4 78.8L279.3 90.9Q277.9 92 277.7 90.4V84.2H265.2Q264.4 84.1 264.5 83.2V72.9Q264.4 72 265.2 71.9Z" fill="url(#gGreen)" stroke="#0b6a04" stroke-width="1.1" stroke-linejoin="round"/>
<path d="M265.6 73H278.8V66.5L291.8 77.6" fill="none" stroke="#c9fba6" stroke-width=".9" opacity=".75"/>
<circle cx="332.8" cy="77.9" r="14.6" fill="url(#gGlobe)" stroke="#2b57c4" stroke-width="1"/>
<clipPath id="cGlobe"><circle cx="332.8" cy="77.9" r="14.1"/></clipPath>
<g clip-path="url(#cGlobe)" fill="url(#gLand)" stroke="#52a81a" stroke-width=".6" stroke-linejoin="round"><path d="M319.5 73.5Q321 67.5 327 64.6Q332 62.6 337.8 64.2L335.6 67.2L336.3 68.8L334.6 68.4L333.2 70.2L334 74.5L333 76.3L331.6 76L331.2 73.2L329.6 73.6L328.4 76.8L329.4 79.5L327.6 79.6L325.2 75.2L323.4 73.4L322.4 76.4L321 76.3Z"/><path d="M326.6 80.2Q328.6 79.2 330.2 80.2Q333.4 80 334.7 82.4Q335.2 85 333.2 86.8L332.6 91.6L330.2 92.2L329.6 87.4Q325.6 86.6 324.4 84Q324.2 81.4 326.6 80.2Z"/><path d="M341.8 68.2L343.4 67.6Q345.6 69.6 346.4 72.6L344.4 73.4L342.6 71.6Z"/><path d="M347.6 76.2Q344.2 76 342.6 78.6Q341.8 82 343.4 84.6L345.2 85.6Q347.4 82 347.6 76.2Z"/></g>
<path d="M328.6 66.2l2.4 -1l.6 1.2l-2.6 1.6z" fill="#9adf9a" opacity=".9"/>
<circle cx="389.1" cy="77.6" r="14.7" fill="#7f7f7f"/>
<g fill="none" stroke="#e6e6e6" stroke-width="1.45" stroke-linecap="round" stroke-linejoin="round">
<path d="M374.4 75.9Q379.6 72.9 384 72Q386.6 71 388.4 69.6 L389.32 69.37 L389.76 69.07 L390.22 68.82 L390.70 68.62 L391.20 68.48 L391.71 68.40 L392.22 68.38 L392.72 68.41 L393.21 68.50 L393.69 68.64 L394.14 68.83 L394.57 69.07 L394.96 69.36 L395.32 69.68 L395.63 70.04 L395.90 70.43 L396.13 70.84 L396.30 71.27 L396.43 71.71 L396.50 72.17 L396.52 72.62 L396.49 73.07 L396.41 73.51 L396.28 73.93 L396.11 74.33 L395.90 74.71 L395.64 75.05 L395.36 75.37 L395.04 75.64 L394.70 75.88 L394.33 76.08 L393.95 76.23 L393.56 76.33 L393.17 76.40 L392.77 76.41 L392.38 76.38 L392.00 76.31 L391.63 76.20 L391.28 76.05 L390.95 75.86 L390.65 75.64 L390.38 75.39 L390.14 75.11 L389.94 74.82 L389.77 74.50 L389.65 74.17 L389.56 73.83 L389.51 73.49 L389.49 73.15 L389.52 72.82 L389.58 72.49 L389.68 72.18 L389.81 71.88 L389.98 71.60 L390.17 71.35 L390.38 71.12 L390.62 70.92 L390.87 70.76 L391.14 70.62 L391.42 70.51 L391.70 70.44 L391.99 70.40 L392.27 70.40 L392.55 70.43 L392.82 70.48 L393.08 70.57 L393.32 70.68 L393.55 70.82 L393.76 70.98 L393.94 71.16 L394.10 71.36 L394.23 71.57 L394.34 71.79 L394.42 72.01 L394.47 72.24 L394.50 72.48 L394.50 72.70 L394.47 72.93 L394.42 73.14 L394.34 73.35 L394.25 73.54 L394.13 73.71 L394.00 73.87 L393.86 74.01 L393.70 74.13 L393.53 74.22 L393.36 74.30 L393.18 74.36 L393.01 74.39 L392.83 74.40 L392.66 74.39"/>
<circle cx="383" cy="78.2" r="3.95"/><path d="M380.83 77.82 L380.95 77.52 L381.11 77.24 L381.30 77.00 L381.52 76.79 L381.77 76.62 L382.03 76.50 L382.31 76.41 L382.58 76.37 L382.86 76.37 L383.13 76.40 L383.38 76.48 L383.61 76.59 L383.82 76.73 L384.00 76.90 L384.15 77.09 L384.27 77.29 L384.35 77.51 L384.40 77.72 L384.42 77.94 L384.40 78.15 L384.35 78.35 L384.28 78.54 L384.18 78.70 L384.06 78.85 L383.92 78.97 L383.77 79.07 L383.61 79.14 L383.45 79.18 L383.29 79.20 L383.14 79.19"/>
<path d="M395.7 76.5Q397 78.6 397.3 80.6 L396.36 80.83 L396.64 81.30 L396.87 81.79 L397.05 82.31 L397.17 82.83 L397.23 83.36 L397.23 83.89 L397.18 84.41 L397.07 84.92 L396.91 85.42 L396.70 85.89 L396.44 86.33 L396.14 86.73 L395.80 87.10 L395.42 87.43 L395.02 87.71 L394.59 87.95 L394.14 88.14 L393.68 88.28 L393.21 88.36 L392.73 88.40 L392.26 88.38 L391.80 88.32 L391.35 88.20 L390.92 88.04 L390.51 87.84 L390.13 87.60 L389.78 87.32 L389.47 87.00 L389.19 86.66 L388.95 86.29 L388.76 85.90 L388.61 85.50 L388.51 85.09 L388.45 84.67 L388.44 84.26 L388.47 83.84 L388.54 83.44 L388.66 83.05 L388.81 82.68 L389.01 82.34 L389.23 82.01 L389.49 81.72 L389.78 81.46 L390.08 81.23 L390.41 81.05 L390.75 80.89 L391.11 80.78 L391.46 80.71 L391.83 80.67 L392.18 80.68 L392.54 80.72 L392.88 80.80 L393.21 80.91 L393.52 81.06 L393.80 81.24 L394.07 81.45 L394.31 81.68 L394.52 81.93 L394.70 82.20 L394.84 82.48 L394.96 82.78 L395.04 83.08 L395.08 83.39 L395.10 83.69 L395.08 83.99 L395.03 84.28 L394.95 84.56 L394.84 84.83 L394.70 85.08 L394.54 85.31 L394.36 85.52 L394.16 85.71 L393.94 85.87 L393.71 86.00 L393.47 86.11 L393.22 86.19 L392.97 86.24 L392.73 86.26 L392.48 86.26 L392.24 86.23 L392.01 86.17 L391.78 86.09 L391.58 85.99 L391.38 85.87 L391.21 85.73 L391.05 85.58 L390.92 85.41 L390.80 85.23 L390.71 85.04 L390.64 84.85 L390.59 84.66 L390.57 84.46 L390.57 84.27 L390.58 84.08 L390.62 83.90 L390.68 83.73 L390.75 83.57 L390.84 83.42 L390.94 83.28 L391.06 83.16"/>
</g>
<path d="M432 69.5Q432 65.8 435.6 65.8H452Q454.6 66 454.6 68Q454.6 69.6 453 69.6H451.5V87Q451.4 90.2 448 90.3H430.5Q427.4 90.2 427.3 87.6Q427.2 86.3 428.6 86.3H432Z" fill="url(#gScroll)" stroke="#9c9c9c" stroke-width=".9" stroke-linejoin="round"/>
<path d="M435.2 66.2Q436.6 67.4 436.4 69.6H451.5" fill="none" stroke="#9c9c9c" stroke-width=".8"/><path d="M428 86.6Q430.8 87.2 431.8 90" fill="none" stroke="#9c9c9c" stroke-width=".7"/>
<rect x="434.5" y="73.2" width="1" height="1.1" fill="#8a8a8a"/><rect x="436.6" y="73.2" width="8" height="1.1" fill="#8e8e8e"/>
<rect x="436.5" y="76.2" width="1" height="1.1" fill="#8a8a8a"/><rect x="438.6" y="76.2" width="8" height="1.1" fill="#8e8e8e"/>
<rect x="438.5" y="79.2" width="1" height="1.1" fill="#8a8a8a"/><rect x="440.6" y="79.2" width="8" height="1.1" fill="#8e8e8e"/>
<rect x="436.5" y="82.2" width="1" height="1.1" fill="#8a8a8a"/><rect x="438.6" y="82.2" width="8" height="1.1" fill="#8e8e8e"/>
<rect x="434.5" y="85.1" width="1" height="1.1" fill="#8a8a8a"/><rect x="436.6" y="85.1" width="8" height="1.1" fill="#8e8e8e"/>
<path d="M475.5 69V65Q475.6 63.6 477 63.6H491.4Q492.8 63.7 492.8 65V69Z" fill="#6d9af6" stroke="#4c5cc0" stroke-width=".9"/>
<path d="M475.5 68.6H503Q504.6 68.7 504.6 70.2V91Q504.5 92.4 503 92.4H477Q475.6 92.3 475.5 91Z" fill="url(#gCardW)" stroke="#6e6e6e" stroke-width="1"/>
<path d="M476 68.3H492.6" stroke="#9ab8f8" stroke-width=".8"/>
<path d="M480.70000000000005 93.3v-2.2a1.9 1.9 0 1 1 1.8 0v2.2z" fill="#d4e0f0"/><path d="M480.70000000000005 92.5v-1.4a1.9 1.9 0 1 1 1.8 0v1.4" fill="none" stroke="#6e6e6e" stroke-width=".9"/>
<path d="M497.70000000000005 93.3v-2.2a1.9 1.9 0 1 1 1.8 0v2.2z" fill="#d4e0f0"/><path d="M497.70000000000005 92.5v-1.4a1.9 1.9 0 1 1 1.8 0v1.4" fill="none" stroke="#6e6e6e" stroke-width=".9"/>
<path d="M478 83Q478 78.2 482.5 77.6Q487 78.2 487 83Z" fill="#3fae2c" stroke="#2a8a1c" stroke-width=".6"/><path d="M482 78h1l.5 4.4h-2z" fill="#fff"/>
<ellipse cx="482.5" cy="74" rx="2.4" ry="2.9" fill="#efb080" stroke="#9a5a3a" stroke-width=".7"/>
<rect x="489" y="73.3" width="13" height="1.2" fill="#9a9a9a"/>
<rect x="489" y="77.3" width="13" height="1.2" fill="#9a9a9a"/>
<rect x="489" y="81.3" width="8" height="1.2" fill="#9a9a9a"/>
<path d="M527.5 63.5H541.5L546.5 68.5V86.5H527.5Z" fill="url(#gDoc)" stroke="#707070"/><path d="M541.5 63.5L546.5 68.5H541.5Z" fill="#3b90e6" stroke="#2f7fd6" stroke-width=".6"/><path d="M542 64.3l3.8 3.8" stroke="#bfe0fb" stroke-width=".9"/>
<rect x="530" y="68.2" width="9.5" height="1.1" fill="#b4b4b4"/>
<rect x="530" y="71.2" width="14" height="1.1" fill="#b4b4b4"/>
<rect x="530" y="74.2" width="14" height="1.1" fill="#b4b4b4"/>
<rect x="530" y="77.2" width="2" height="1.1" fill="#b4b4b4"/>
<rect x="530" y="80.2" width="2" height="1.1" fill="#b4b4b4"/>
<rect x="533.5" y="77.6" width="23" height="14.8" fill="url(#gEnv)" stroke="#6e6e6e"/><path d="M534 78.2L545 88.6L556 78.2" fill="#fdfdfd" stroke="#7a7a7a" stroke-width=".9"/><path d="M534 92L541.4 85.2M556 92L548.6 85.2" stroke="#b2b2b2" stroke-width=".8"/>
<g transform="translate(583,61.3) scale(1)"><path d="M4 6.5V1.2Q4 .5 4.8 .5H11.2Q12 .5 12 1.2V6.5Z" fill="#eee" stroke="#3a3a3a" stroke-width=".9"/><rect x="5" y="1.4" width="6" height="4" fill="#d0d0d0"/><rect x=".6" y="6" width="14.8" height="6" rx="2.6" fill="url(#gPrn)" stroke="#2a4a9a" stroke-width=".9"/><rect x="2.2" y="9" width="11.6" height="2" fill="#0c1c48"/><rect x="12.2" y="7.4" width="1.2" height="1" fill="#fff"/><path d="M3.4 11V15.2H12.6V11" fill="#fafafa" stroke="#111" stroke-width=".9"/><rect x="4.2" y="12.8" width="7.6" height="1.6" fill="#e0e0e0"/></g>
<rect x="583.5" y="84.5" width="13" height="10" rx="1" fill="#f4f4f4" stroke="#8a8a8a"/><rect x="584" y="87" width="12" height="1" fill="#f08080"/><rect x="584" y="89.5" width="5" height="1" fill="#7fa6fa"/><rect x="584" y="91.8" width="4" height="1" fill="#7fa6fa"/><rect x="586" y="86" width="3" height=".9" fill="#777"/><rect x="590" y="86" width="4" height=".9" fill="#777"/>
<g transform="translate(587,88.4) scale(0.78)"><path d="M4 6.5V1.2Q4 .5 4.8 .5H11.2Q12 .5 12 1.2V6.5Z" fill="#eee" stroke="#3a3a3a" stroke-width=".9"/><rect x="5" y="1.4" width="6" height="4" fill="#d0d0d0"/><rect x=".6" y="6" width="14.8" height="6" rx="2.6" fill="url(#gPrn)" stroke="#2a4a9a" stroke-width=".9"/><rect x="2.2" y="9" width="11.6" height="2" fill="#0c1c48"/><rect x="12.2" y="7.4" width="1.2" height="1" fill="#fff"/><path d="M3.4 11V15.2H12.6V11" fill="#fafafa" stroke="#111" stroke-width=".9"/><rect x="4.2" y="12.8" width="7.6" height="1.6" fill="#e0e0e0"/></g>
<path d="M585.6 110.8H596.4L595.6 121.6Q595.5 122.6 594.5 122.6H587.5Q586.5 122.6 586.4 121.6Z" fill="url(#gTrash)" stroke="#6c6c6c" stroke-width=".8"/><path d="M584.4 110.6Q584.4 108.6 586.4 108.6H595.6Q597.6 108.6 597.6 110.6Z" fill="#e2e2e2" stroke="#6c6c6c" stroke-width=".8"/><path d="M589 108.4Q589 107.2 590 107.2H592Q593 107.2 593 108.4" fill="none" stroke="#5a5a5a" stroke-width=".9"/><path d="M588.5 112.5V121M591 112.5V121M593.5 112.5V121" stroke="#7c7c7c" stroke-width="1"/>
<path d="M753.9 63.2L762 71.2Q762.4 72 761.4 72H757.8V78.6Q757.7 79.4 757 79.4H750.8Q750.1 79.4 750 78.6V72H746.4Q745.4 72 745.8 71.2Z" fill="url(#gYel)" stroke="#b27c08" stroke-width="1" stroke-linejoin="round"/><path d="M753.9 64.8L760 71" stroke="#fffcc0" stroke-width=".8" fill="none"/>
<path d="M744.2 81.2H763.8L769 86V90.2Q769 91.6 767.4 91.6H740.6Q739.2 91.6 739.1 90.2V86Z" fill="#f4f4f4" stroke="#858585" stroke-width=".9" stroke-linejoin="round"/><path d="M744.4 81.6H763.6L768.2 85.6H739.9Z" fill="#d0d0d0"/><rect x="741" y="91.6" width="3" height="1" fill="#8a8a8a"/><rect x="764" y="91.6" width="3" height="1" fill="#8a8a8a"/><rect x="756" y="87.8" width="10" height="1" fill="#7a7a7a"/><rect x="754" y="87.8" width="1" height="1" fill="#555"/><rect x="742" y="88" width="1.2" height="1.2" fill="#5ad02a"/>
<path d="M977.8 35.4H988.2Q990.5 35.5 990.6 37.8V43.8Q990.5 46.2 988.2 46.2H986L982.2 50.6V46.2H977.8Q975.5 46.2 975.4 43.8V37.8Q975.5 35.5 977.8 35.4Z" fill="url(#gOr)" stroke="#c4581c" stroke-width="1" stroke-linejoin="round"/>
<text x="983.2" y="44" font-family="Liberation Serif,serif" font-weight="bold" font-size="10.5" fill="#b2441e" text-anchor="middle">i</text>
<circle cx="1005" cy="42.9" r="7.4" fill="url(#gRed)" stroke="#a81410" stroke-width="1"/>
<text x="1005.2" y="47" font-family="Liberation Sans,sans-serif" font-size="11.5" fill="#fff" text-anchor="middle">?</text>
<rect x="454.5" y="331.5" width="9" height="8" fill="#fff" stroke="#6fa8ee" stroke-width=".8"/><rect x="454.5" y="331.2" width="9" height="1.6" fill="#dfeeff"/>
<path d="M462.1 343.4V339.4Q459.4 338.2 459.6 335.6Q459.8 333.8 461.4 333V335.8L463.6 336.8L465.8 335.8V333Q467.6 334 467.6 336Q467.5 338.4 465.1 339.5V343.4Q463.6 344.4 462.1 343.4Z" fill="#404040"/><path d="M463.6 338v5" stroke="#6a6a6a" stroke-width=".8"/>
<g transform="translate(453,360)" stroke="#0d3eaa" stroke-width=".95" stroke-linejoin="round"><path d="M.1 6.5L2.2 .1L3.1 1.3C5.5 0 8.5 -.2 10.2 1C12 2.2 13 3.6 13.8 4.7C12 3.6 10 2.8 8.6 3.2C7.6 3.6 7.2 4.8 7.3 6.5Z" fill="url(#gRef)"/><path d="M.1 6.5L2.2 .1L3.1 1.3C5.5 0 8.5 -.2 10.2 1C12 2.2 13 3.6 13.8 4.7C12 3.6 10 2.8 8.6 3.2C7.6 3.6 7.2 4.8 7.3 6.5Z" fill="url(#gRef)" transform="rotate(180 8 7.85)"/></g>
<path d="M453.6 398.4L461 392.4V396Q467.6 396.4 468.8 405.2Q466 400.8 461 401V404.4Z" fill="url(#gUndo)" stroke="#5a50c4" stroke-width=".9" stroke-linejoin="round"/></svg>
</div>
</body></html>
